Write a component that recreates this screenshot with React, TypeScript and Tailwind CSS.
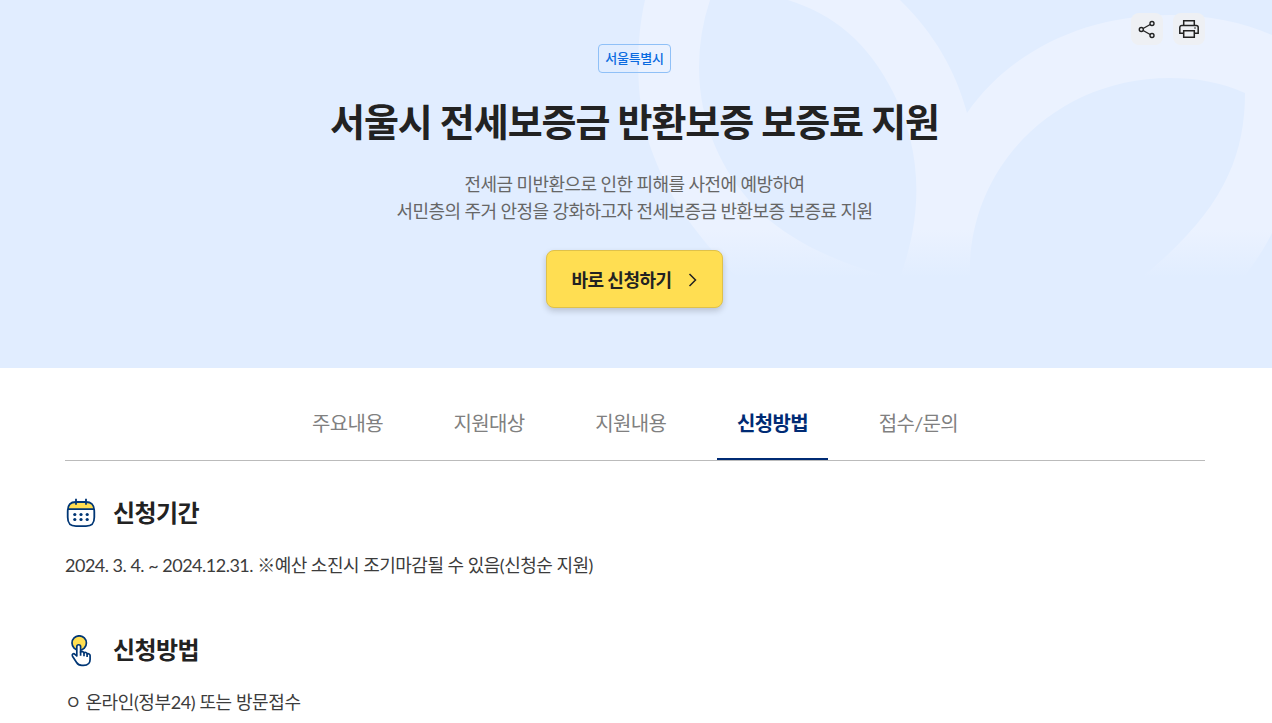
import type { ReactNode } from 'react';

const tabs = ['주요내용', '지원대상', '지원내용', '신청방법', '접수/문의'];
const activeTab = '신청방법';

function ShareIcon() {
  return (
    <svg width="20" height="20" viewBox="0 0 20 20" fill="none" stroke="#222" strokeWidth="1.4">
      <circle cx="4.3" cy="10.5" r="2" />
      <circle cx="15" cy="4.5" r="2" />
      <circle cx="15" cy="16.5" r="2" />
      <path d="m6.1 9.5 7.1-4M6.1 11.5l7.1 4" />
    </svg>
  );
}

function PrintIcon() {
  return (
    <svg width="22" height="20" viewBox="0 0 22 20" fill="none" stroke="#222" strokeWidth="1.5">
      <path d="M5.7 6.5V1.7h10.6v4.8" />
      <path d="M5.7 14.3H1.8V8.5a2 2 0 0 1 2-2h14.4a2 2 0 0 1 2 2v5.8h-3.9" />
      <path d="M5.7 11.7h10.6v6.6H5.7z" />
      <path d="M17 8.3v1.4" strokeWidth="1.2" />
    </svg>
  );
}

function CalendarIcon() {
  return (
    <svg className="translate-y-px" width="32" height="32" viewBox="0 0 32 32" fill="none" stroke="#003675" strokeWidth="1.8">
      <path d="M3 11.7C3.4 6 6 4 11 4h10c5 0 7.6 2 8 7.7z" fill="#ffde52" stroke="none" />
      <path d="M2.7 14C2.7 6.5 5.5 4 11 4h10c5.5 0 8.3 2.5 8.3 10v5.3c0 6.2-2.3 8.8-8.3 8.8H11c-6 0-8.3-2.6-8.3-8.8z" />
      <path d="M3 11.2h26M11 .8v6M21 .8v6" />
      <g fill="#003675" stroke="none">
        <circle cx="9.8" cy="16.5" r="1.6" />
        <circle cx="16" cy="16.5" r="1.6" />
        <circle cx="22.2" cy="16.5" r="1.6" />
        <circle cx="9.8" cy="21.5" r="1.6" />
        <circle cx="16" cy="21.5" r="1.6" />
        <circle cx="22.2" cy="21.5" r="1.6" />
      </g>
    </svg>
  );
}

function TouchIcon() {
  return (
    <svg className="translate-y-px" width="32" height="32" viewBox="0 0 32 32" fill="none" stroke="#003675" strokeWidth="1.7" strokeLinejoin="round">
      <circle cx="14.2" cy="8" r="7.2" fill="#ffde52" />
      <path
        d="M11.8 21V11.7c0-2.6 3.8-2.6 3.8 0v5.5c.5-1 3.2-.9 3.4.7.8-.8 2.9-.5 3.1 1 1.2-.6 3 .1 3 1.7v4c0 4-2.6 5.8-6.6 5.8h-1.7c-2.5 0-4-.9-5.2-2.9L7.5 21.2c-1-2 1.1-3.3 2.5-1.9z"
        fill="#fff"
      />
      <path d="M15.6 16.5v4.3M19 18v3.3M22.1 19v3" />
    </svg>
  );
}

function HeroPattern() {
  return (
    <svg className="absolute right-0 top-0" width="672" height="280" viewBox="600 0 672 280">
      <defs>
        <linearGradient id="fade" x1="0" y1="0" x2="0" y2="280" gradientUnits="userSpaceOnUse">
          <stop offset="0.82" stopColor="#ebf2ff" />
          <stop offset="0.99" stopColor="#e1edff" />
        </linearGradient>
      </defs>
      <g fill="url(#fade)" fillRule="evenodd">
        <path d="M645 0C634 48 637 105 649 143C664 187 684 222 739 280H899C924 214 922 150 893 92C868 43 835 15 788 0H900C935 34 956 72 967 113C1010 51 1085 15 1170 15C1208 15 1243 22 1272 35V233Q1263 252 1242 280H1138C1220 215 1245 160 1245 93C1221 82 1195 78 1170 78C1054 78 965 169 970 280H902C840 265 791 242 757 209C722 173 699 123 699 67Q699 33 710 0Z" />
      </g>
    </svg>
  );
}

function Section({ icon, title, children }: { icon: ReactNode; title: string; children: ReactNode }) {
  return (
    <section>
      <div className="flex h-9 items-center gap-4">
        {icon}
        <h2 className="text-2xl font-bold tracking-[-0.6px] text-[#222]">{title}</h2>
      </div>
      <p className="mt-[19px] text-lg leading-[30px] text-[#3c3c3c]">{children}</p>
    </section>
  );
}

export default function App() {
  return (
    <div className="h-[723px] overflow-hidden bg-white font-[Lato,'Noto_Sans_CJK_KR',sans-serif]">
      <header className="relative h-[368px] bg-[#e1edff]">
        <HeroPattern />
        <div className="absolute right-[67px] top-[13px] flex gap-2.5">
          <button aria-label="공유" className="flex size-8 items-center justify-center rounded-lg bg-[#eef0f4]">
            <ShareIcon />
          </button>
          <button aria-label="인쇄" className="flex size-8 items-center justify-center rounded-lg bg-[#eef0f4]">
            <PrintIcon />
          </button>
        </div>

        <div className="relative flex flex-col items-center pr-[3px] pt-11 text-center">
          <span className="flex h-[29px] w-[73px] items-center justify-center rounded border border-[#8fc0f7] pb-0.5 text-[13px] font-medium leading-[18px] tracking-[-0.3px] text-[#0b6be0]">
            서울특별시
          </span>
          <h1 className="mt-5 text-[38px] font-bold leading-[57px] tracking-[-1.06px] text-[#222]">
            서울시 전세보증금 반환보증 보증료 지원
          </h1>
          <p className="mt-[21px] text-lg leading-[27px] tracking-[-0.57px] text-[#666]">
            전세금 미반환으로 인한 피해를 사전에 예방하여
            <br />
            서민층의 주거 안정을 강화하고자 전세보증금 반환보증 보증료 지원
          </p>
          <button className="mt-[25px] flex h-[58px] w-[177px] items-center justify-center gap-3 rounded-lg border border-[#dfc14a] bg-[#ffde52] pl-0.5 pt-0.5 text-lg font-bold tracking-[-0.5px] text-[#222] shadow-[0_3px_6px_rgba(0,0,0,0.18)]">
            바로 신청하기
            <svg width="16" height="16" viewBox="0 0 16 16" fill="none" stroke="#222" strokeWidth="1.5">
              <path d="m5.5 2 6 6-6 6" />
            </svg>
          </button>
        </div>
      </header>

      <main className="mx-auto w-[1142px] pr-0.5">
        <nav className="flex h-[93px] justify-center gap-[30.7px] border-b border-[#bbb] tracking-[-0.65px]">
          {tabs.map((tab) => (
            <a
              key={tab}
              className={
                tab === activeTab
                  ? 'flex items-center border-b-2 border-[#002b74] px-5 pt-5 text-xl font-bold text-[#002b74]'
                  : 'flex items-center border-b-2 border-transparent px-5 pt-5 text-xl text-[#808080]'
              }
            >
              {tab}
            </a>
          ))}
        </nav>

        <div className="flex flex-col gap-[52px] pt-[34px]">
          <Section icon={<CalendarIcon />} title="신청기간">
            <span className="tracking-[-0.5px]">2024. 3. 4. ~ 2024.12.31. ※예산 소진시 조기마감될 수 있음(신청순 지원)</span>
          </Section>
          <Section icon={<TouchIcon />} title="신청방법">
            <span className="tracking-[-0.39px]">ㅇ 온라인(정부24) 또는 방문접수</span>
          </Section>
        </div>
      </main>
    </div>
  );
}
